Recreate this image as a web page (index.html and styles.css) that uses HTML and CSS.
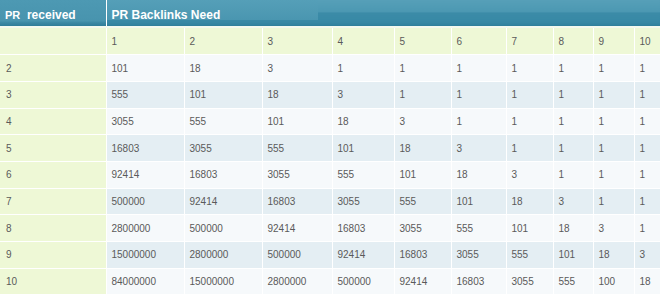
FILE: index.html
```html
<!DOCTYPE html>
<html>
<head>
<meta charset="utf-8">
<link rel="stylesheet" href="styles.css">
</head>
<body>
<table class="pr-table">
  <colgroup>
    <col class="c0"><col class="c1"><col class="c2"><col class="c3"><col class="c4"><col class="c5"><col class="c6"><col class="c7"><col class="c8"><col class="c9"><col class="c10">
  </colgroup>
  <thead>
    <tr class="head">
      <th class="h-left"><span class="pr">PR</span>&nbsp;&nbsp;received</th>
      <th class="h-right" colspan="10"><span class="label">PR Backlinks Need</span></th>
    </tr>
  </thead>
  <tbody>
    <tr class="nums"><td class="first"></td><td>1</td><td>2</td><td>3</td><td>4</td><td>5</td><td>6</td><td>7</td><td>8</td><td>9</td><td>10</td></tr>
    <tr class="odd"><td class="first">2</td><td>101</td><td>18</td><td>3</td><td>1</td><td>1</td><td>1</td><td>1</td><td>1</td><td>1</td><td>1</td></tr>
    <tr class="even"><td class="first">3</td><td>555</td><td>101</td><td>18</td><td>3</td><td>1</td><td>1</td><td>1</td><td>1</td><td>1</td><td>1</td></tr>
    <tr class="odd"><td class="first">4</td><td>3055</td><td>555</td><td>101</td><td>18</td><td>3</td><td>1</td><td>1</td><td>1</td><td>1</td><td>1</td></tr>
    <tr class="even"><td class="first">5</td><td>16803</td><td>3055</td><td>555</td><td>101</td><td>18</td><td>3</td><td>1</td><td>1</td><td>1</td><td>1</td></tr>
    <tr class="odd"><td class="first">6</td><td>92414</td><td>16803</td><td>3055</td><td>555</td><td>101</td><td>18</td><td>3</td><td>1</td><td>1</td><td>1</td></tr>
    <tr class="even"><td class="first">7</td><td>500000</td><td>92414</td><td>16803</td><td>3055</td><td>555</td><td>101</td><td>18</td><td>3</td><td>1</td><td>1</td></tr>
    <tr class="odd"><td class="first">8</td><td>2800000</td><td>500000</td><td>92414</td><td>16803</td><td>3055</td><td>555</td><td>101</td><td>18</td><td>3</td><td>1</td></tr>
    <tr class="even"><td class="first">9</td><td>15000000</td><td>2800000</td><td>500000</td><td>92414</td><td>16803</td><td>3055</td><td>555</td><td>101</td><td>18</td><td>3</td></tr>
    <tr class="odd"><td class="first">10</td><td>84000000</td><td>15000000</td><td>2800000</td><td>500000</td><td>92414</td><td>16803</td><td>3055</td><td>555</td><td>100</td><td>18</td></tr>
  </tbody>
</table>
</body>
</html>
```
FILE: styles.css
```css
html, body {
  margin: 0;
  padding: 0;
  background: #ffffff;
}

.pr-table {
  width: 660px;
  height: 294px;
  table-layout: fixed;
  border-collapse: collapse;
  border-style: hidden;
  font-family: "Liberation Sans", Arial, sans-serif;
  font-size: 10px;
  color: #5a5a5a;
}

.c0 { width: 106px; }
.c1 { width: 78px; }
.c2 { width: 78px; }
.c3 { width: 70px; }
.c4 { width: 62px; }
.c5 { width: 57px; }
.c6 { width: 55px; }
.c7 { width: 47px; }
.c8 { width: 40px; }
.c9 { width: 41px; }
.c10 { width: 26px; }

.pr-table th,
.pr-table td {
  border: 1px solid #ffffff;
  text-align: left;
  vertical-align: middle;
  padding: 0 0 0 5px;
  white-space: nowrap;
  overflow: hidden;
}

.head {
  height: 27px;
}

.head th {
  color: #ffffff;
  font-size: 12px;
  font-weight: bold;
  padding-top: 3px;
  border-bottom: 2px solid #f3f9ee;
}

.h-left {
  padding-left: 7px;
  background: linear-gradient(#4d99b3 0, #4894ae 80%, #3a87a3 88%, #2f7d99 100%);
}

.h-left .pr {
  font-size: 11px;
}

.h-right {
  position: relative;
  padding-left: 7px;
  background: linear-gradient(#569fb8 0, #4c98b2 45%, #3b8ba7 50%, #3788a5 85%, #2f7f9c 100%);
}

.h-right::before {
  content: "";
  position: absolute;
  left: 0;
  top: 0;
  width: 211px;
  height: 20px;
  background: linear-gradient(#559fb8, #4a96b0);
}

.h-right .label {
  position: relative;
}

.nums td {
  background: #eef8d6;
}

.first {
  background: #eef8d6;
}

.odd td {
  background: #f6f9fb;
}

.even td {
  background: #e4eef3;
}

.odd td.first,
.even td.first {
  background: #eef8d6;
  padding-left: 6px;
}
```
